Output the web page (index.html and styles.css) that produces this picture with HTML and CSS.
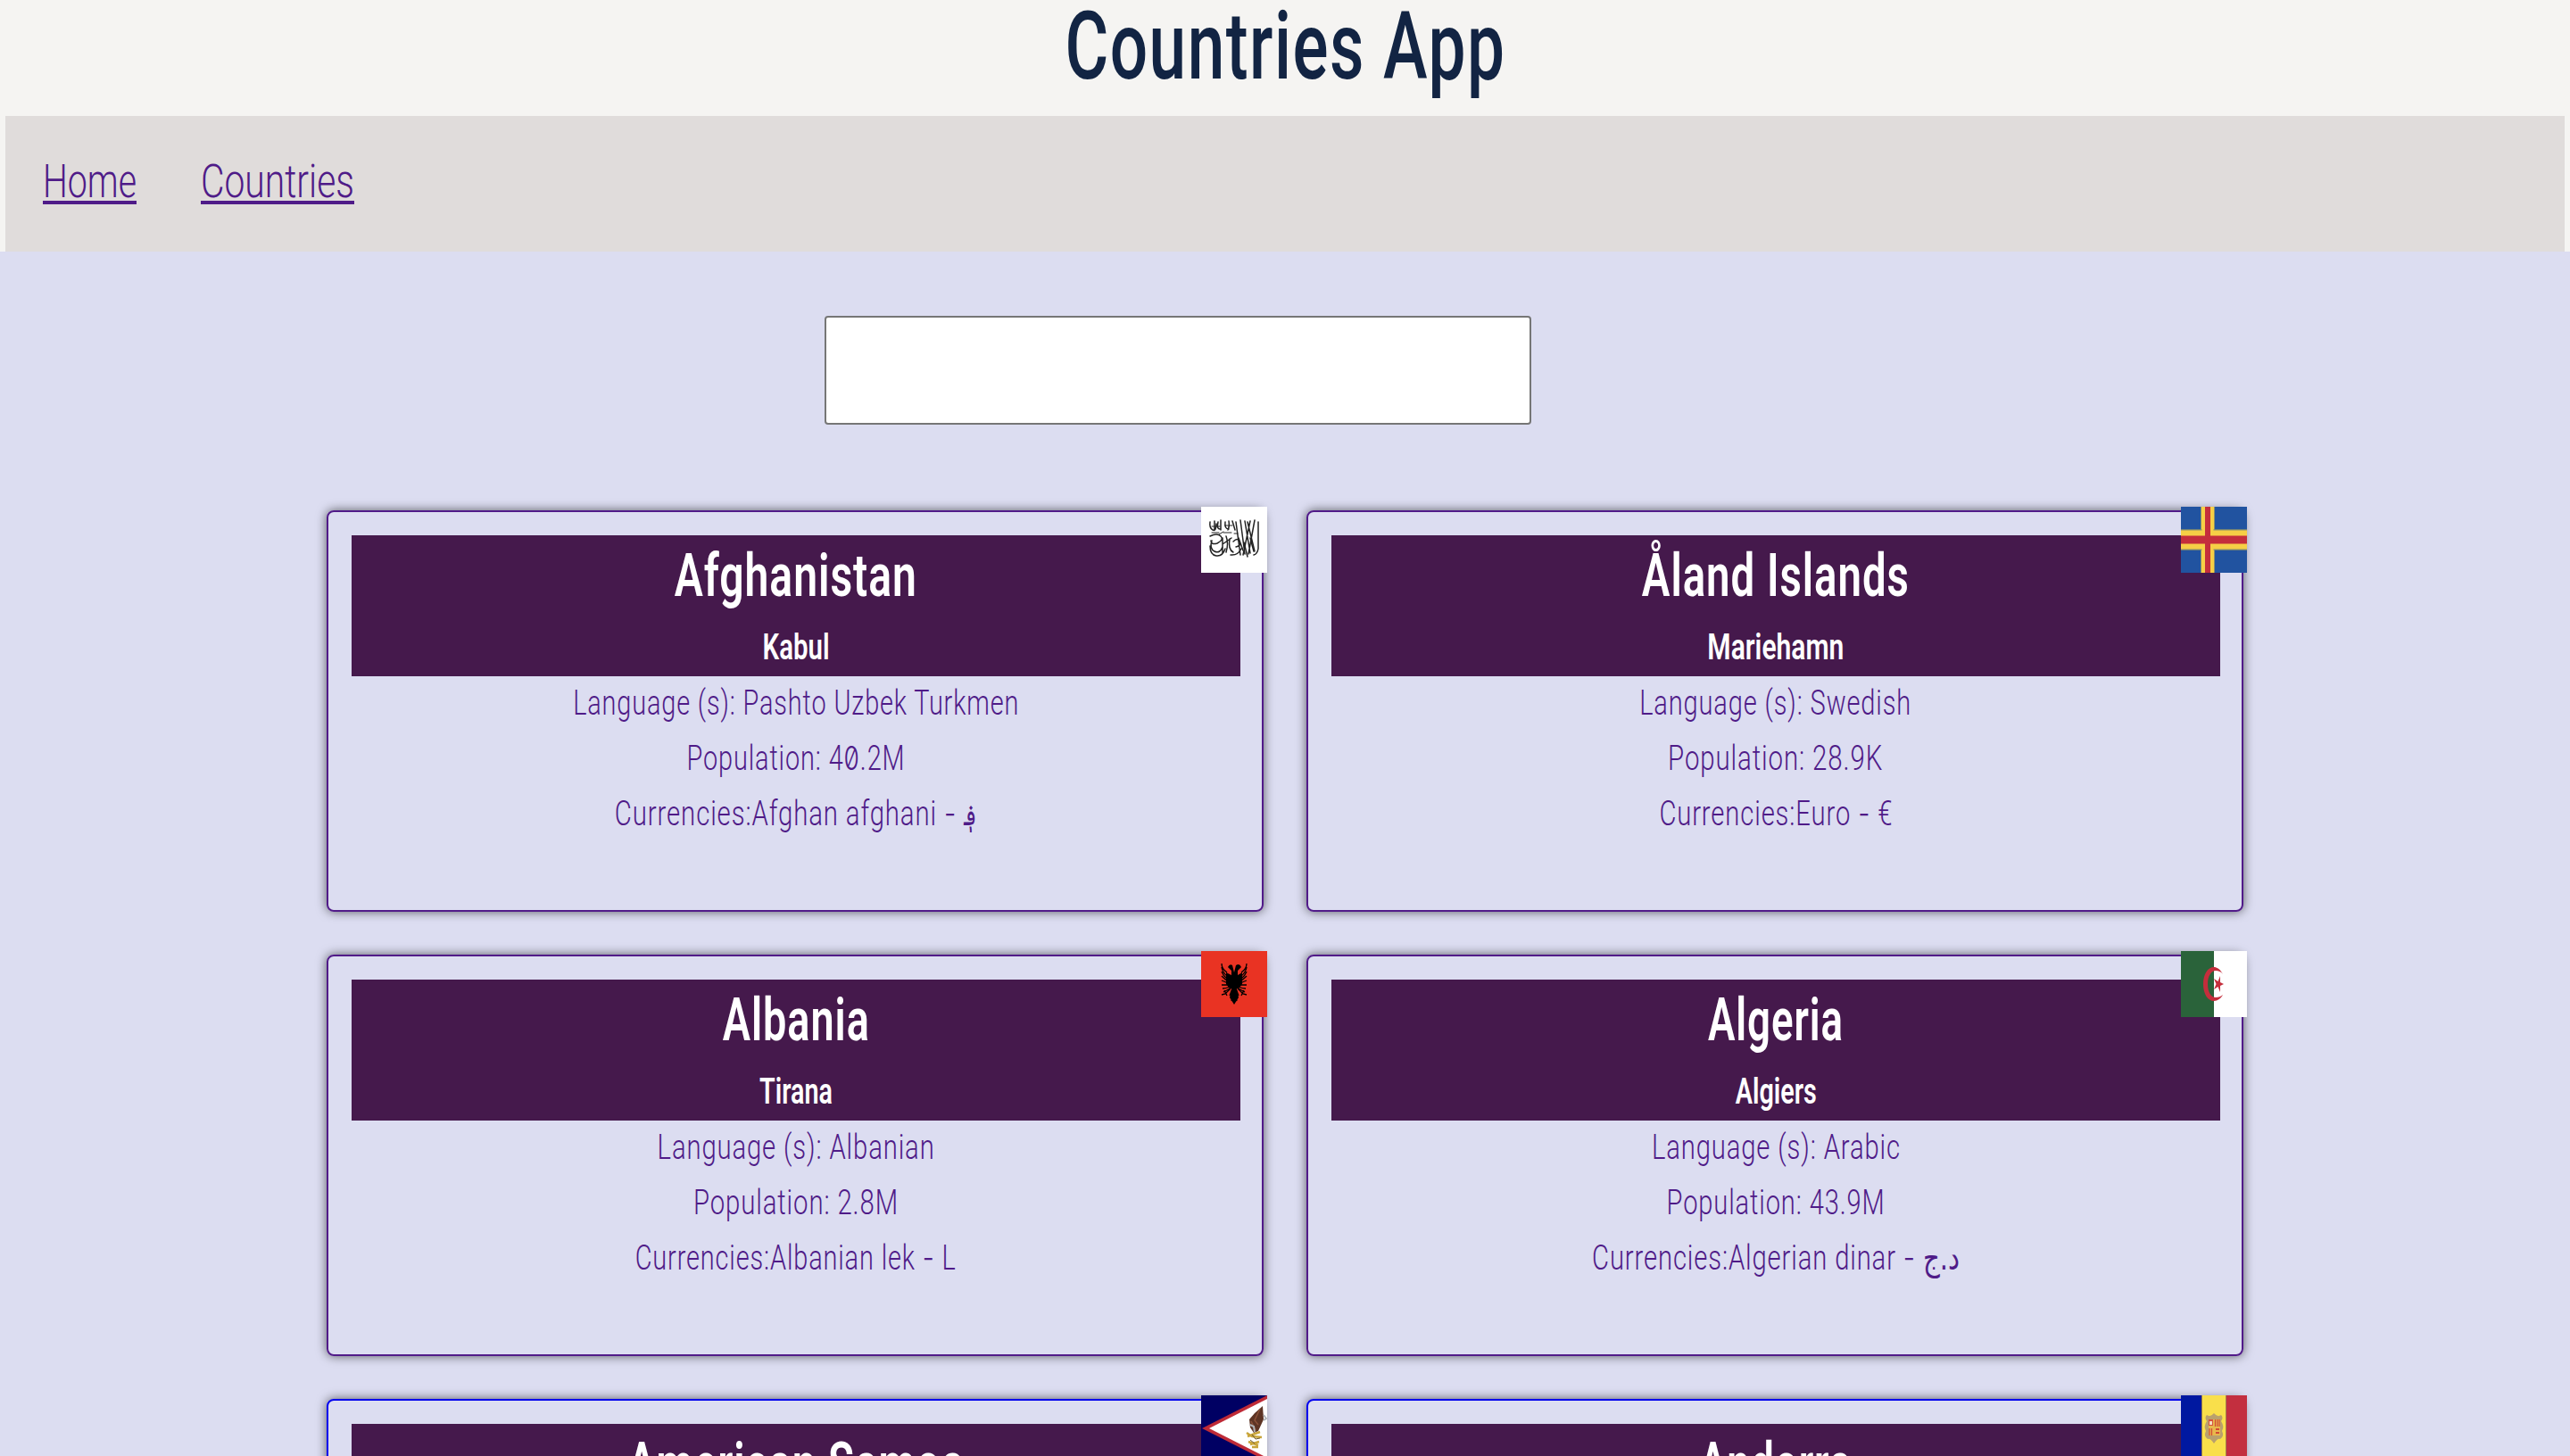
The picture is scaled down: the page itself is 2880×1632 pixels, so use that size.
FILE: index.html
```html
<!DOCTYPE html>
<html lang="en">
<head>
<meta charset="utf-8">
<title>Countries App</title>
<link rel="stylesheet" href="styles.css">
</head>
<body>
<header class="header">
  <h1 class="app-title"><span data-width="494">Countries App</span></h1>
  <nav class="nav">
    <a class="nav-link" href="#"><span data-width="105">Home</span></a>
    <a class="nav-link" href="#"><span data-width="172">Countries</span></a>
  </nav>
</header>
<main class="main">
  <input class="search" type="text" aria-label="Search countries">
  <div class="grid">

    <article class="card">
      <svg class="flag" viewBox="0 0 74 74">
        <rect width="74" height="74" fill="#fff"/>
        <g fill="none" stroke="#222" stroke-width="1.5" stroke-linecap="round">
          <path d="M10 17q-1 7 3 9t4-7M15 16v10M19 17q-2 9 3 8M22 15v11M27 17q-1 8 4 8M31 16q1 6-1 10M35 16l3 10M39 17l5 37M44 15l5 38M49 16l6 36M55 16l-8 38M52 17l8 33M60 15l-7 38M64 17v30q-1 6-5 7"/>
          <path d="M10 33q8-4 12 0t-4 8q-7 2-7-3M10 44q0 10 7 11t10-8M12 38q-3 9 3 12t9-5M24 35v17M28 33q3 8 0 18M24 42l10-7M32 36q-2 12 4 15M36 39q5-5 7 0t-4 6M33 54q8 1 12-7M42 35l5 14M48 40l4 16M55 35l4 15"/>
          <path d="M12 29h8M25 29h9M37 30h4M20 31l5-3M12 22h9M27 21h8" stroke-width="1"/>
        </g>
      </svg>
      <div class="banner">
        <h2 class="name"><span data-width="272">Afghanistan</span></h2>
        <h3 class="capital"><span data-width="75">Kabul</span></h3>
      </div>
      <p class="fact"><span data-width="500">Language (s): Pashto Uzbek Turkmen</span></p>
      <p class="fact"><span data-width="245">Population: 4<b class="zero">0</b>.2M</span></p>
      <p class="fact"><span data-width="406">Currencies:Afghan afghani <span class="dash">-</span> <bdi class="symbol symbol-afn">؋</bdi></span></p>
    </article>

    <article class="card">
      <svg class="flag" viewBox="0 0 74 74">
        <rect width="74" height="74" fill="#2153a0"/>
        <path d="M30 0V74M0 37H74" stroke="#8a8f6a" stroke-width="16"/>
        <path d="M30 0V74" stroke="#f6cf46" stroke-width="14"/>
        <path d="M0 37H74" stroke="#8a8f6a" stroke-width="23.500"/>
        <path d="M0 37H74" stroke="#f6cf46" stroke-width="21"/>
        <path d="M30 0V74" stroke="#f6cf46" stroke-width="13"/>
        <path d="M30 0V74" stroke="#c42e3c" stroke-width="6"/>
        <path d="M0 37H74" stroke="#c42e3c" stroke-width="9"/>
      </svg>
      <div class="banner">
        <h2 class="name"><span data-width="300">Åland Islands</span></h2>
        <h3 class="capital"><span data-width="153">Mariehamn</span></h3>
      </div>
      <p class="fact"><span data-width="305">Language (s): Swedish</span></p>
      <p class="fact"><span data-width="241">Population: 28.9K</span></p>
      <p class="fact"><span data-width="262">Currencies:Euro <span class="dash">-</span> €</span></p>
    </article>

    <article class="card">
      <svg class="flag" viewBox="0 0 74 74">
        <rect width="74" height="74" fill="#e93323"/>
        <path d="M28 24L34 27V22L30 18Q32 14 35 16L37 24L39 16Q43 13 45 18L41 22V27L46 24V37L42 42H32L28 37Z"/>
        <path d="M35 40H39L42 52L37 60L32 52Z"/>
        <g fill="none" stroke="#000" stroke-width="1.300">
          <path d="M23 14Q23 20 29 24M23 18Q24 24 29 28M23 23Q25 28 29 31M23 28Q26 31 30 34M23 33Q26 34 30 36M23 38Q27 38 31 38M24 42Q28 42 32 40M25 46L34 41M23 49L27 48L33 42M26 44L29 50M32 50L35 42M34 56L37 46"/>
          <path d="M51 14Q51 20 45 24M51 18Q50 24 45 28M51 23Q49 28 45 31M51 28Q48 31 44 34M51 33Q48 34 44 36M51 38Q47 38 43 38M50 42Q46 42 42 40M49 46L40 41M51 49L47 48L41 42M48 44L45 50M42 50L39 42M40 56L37 46"/>
        </g>
      </svg>
      <div class="banner">
        <h2 class="name"><span data-width="165">Albania</span></h2>
        <h3 class="capital"><span data-width="82">Tirana</span></h3>
      </div>
      <p class="fact"><span data-width="311">Language (s): Albanian</span></p>
      <p class="fact"><span data-width="230">Population: 2.8M</span></p>
      <p class="fact"><span data-width="360">Currencies:Albanian lek <span class="dash">-</span> L</span></p>
    </article>

    <article class="card">
      <svg class="flag" viewBox="0 0 74 74">
        <rect width="74" height="74" fill="#fff"/>
        <rect width="37" height="74" fill="#2a633a"/>
        <path d="M47 26C44 20 40 18 37 18C30 18 25 26 25 37S30 56 37 56C41 56 45 53 47 49C45 51 42 52 39 52C34 52 30 46 30 37S34 22 39 22C42 22 45 23 47 26Z" fill="#c42e3c"/>
        <path d="M44 28L44 35L48 37L44 39L44 46L41.500 40L37 43L39.500 37L37 31L41.500 34Z" fill="#c42e3c"/>
      </svg>
      <div class="banner">
        <h2 class="name"><span data-width="152">Algeria</span></h2>
        <h3 class="capital"><span data-width="91">Algiers</span></h3>
      </div>
      <p class="fact"><span data-width="279">Language (s): Arabic</span></p>
      <p class="fact"><span data-width="245">Population: 43.9M</span></p>
      <p class="fact"><span data-width="412">Currencies:Algerian dinar <span class="dash">-</span> <bdi class="symbol">د.ج</bdi></span></p>
    </article>

    <article class="card card-unvisited">
      <svg class="flag" viewBox="0 0 74 74">
        <rect width="74" height="74" fill="#000063"/>
        <path d="M74 0V74L1 37Z" fill="#be2a37"/>
        <path d="M74 4V70L9 37Z" fill="#fff"/>
        <path d="M69 12L70 27L64 40L59 42L55 36L54 27L60 20Z" fill="#5d3424"/>
        <path d="M66 15L60 28L64 33M56 29L61 39" stroke="#8a5138" stroke-width="1.500" fill="none"/>
        <path d="M70 22L73 26L70 28M55 33L59 35L60 41" stroke="#aeb2b6" stroke-width="2" fill="none"/>
        <path d="M51 42L57 46L68 47M52 46L66 41M53 52L64 56M55 55L65 52M57 58L64 58" stroke="#c9a53a" stroke-width="2.500" fill="none"/>
        <path d="M57 44L61 49L66 48M55 50L60 54" stroke="#6d5830" stroke-width="1" fill="none"/>
      </svg>
      <div class="banner">
        <h2 class="name"><span data-width="378">American Samoa</span></h2>
      </div>
    </article>

    <article class="card card-unvisited">
      <svg class="flag" viewBox="0 0 74 74">
        <rect width="74" height="74" fill="#f9df4b"/>
        <rect width="23.500" height="74" fill="#0018a0"/>
        <rect x="50.500" width="23.500" height="74" fill="#c32f3f"/>
        <path d="M23.500 0V74M50.500 0V74" stroke="#a1824a" stroke-width="1"/>
        <path d="M29 22Q33 25 37 20Q41 25 45 22Q48 25 45 29Q49 35 46 40Q49 46 44 49Q41 48 37 54Q33 48 30 49Q25 46 28 40Q25 35 29 29Q26 25 29 22Z" fill="#b9a06d"/>
        <rect x="31" y="27" width="13" height="18" fill="#e8b74c"/>
        <path d="M31 27H36V34H31Z" fill="#d5523d"/>
        <path d="M32 29H35V33H32Z" fill="#f4dcc0"/>
        <path d="M38.500 27V35M40.800 27V35M43 27V35M32 37V45M34.500 37V45" stroke="#d04a35" stroke-width="1.200"/>
        <path d="M39 38H43M39 42H43" stroke="#d04a35" stroke-width="1.800"/>
      </svg>
      <div class="banner">
        <h2 class="name"><span data-width="171">Andorra</span></h2>
      </div>
    </article>

  </div>
</main>
<script src="fit.js"></script>
</body>
</html>
```

FILE: styles.css
```css
* { box-sizing: border-box; margin: 0; padding: 0; }

html, body { height: 100%; overflow: hidden; }

body {
  background: #dcddf1;
  font-family: Roboto, "Liberation Sans", sans-serif;
  font-weight: 300;
  color: #4f1b88;
}

/* Labels are condensed horizontally around their centre */
[data-width] {
  display: inline-block;
  white-space: nowrap;
}

.header {
  background: #f5f4f2;
  height: 282px;
  padding: 0 6px;
}

.app-title {
  height: 130px;
  text-align: center;
  font-size: 106px;
  line-height: 104px;
  font-weight: 500;
  letter-spacing: 0.02em;
  color: #122443;
}

.nav {
  height: 152px;
  background: #e0dcdb;
  display: flex;
  gap: 72px;
  padding: 44px 42px 0;
  font-size: 51px;
  line-height: 60px;
}

.nav-link {
  color: #4f1b88;
  text-decoration: none;
}

.nav-link [data-width] {
  transform-origin: left center;
  text-decoration: underline;
  text-decoration-thickness: 4px;
  text-underline-offset: 4px;
  text-decoration-skip-ink: none;
}

.main {
  padding-top: 72px;
}

.search {
  display: block;
  width: 792px;
  height: 122px;
  margin-left: 924px;
  border: 2px solid #767676;
  border-radius: 4px;
  background: #fff;
}

.grid {
  display: grid;
  grid-template-columns: 1050px 1050px;
  grid-auto-rows: 450px;
  gap: 48px;
  margin: 96px 0 0 366px;
}

.card {
  position: relative;
  border: 2px solid #511b89;
  border-radius: 8px;
  padding: 26px 24px 0 26px;
  box-shadow: 0 0 12px rgba(0, 0, 0, 0.6);
  text-align: center;
}

.card-unvisited { border-color: #0000ee; }

.flag {
  position: absolute;
  top: -6px;
  right: -6px;
  width: 74px;
  height: 74px;
}

.banner {
  height: 158px;
  padding-top: 1px;
  background: #45194c;
  color: #fff;
}

.name {
  font-size: 66px;
  line-height: 89px;
  height: 89px;
  font-weight: 600;
  letter-spacing: 0.02em;
}

.capital {
  margin-top: 3px;
  font-size: 40px;
  line-height: 65px;
  height: 65px;
  font-weight: 600;
}

.fact {
  height: 58px;
  margin-bottom: 4px;
  font-size: 38px;
  line-height: 60px;
  letter-spacing: 0.03em;
}

.zero {
  font-family: Inter, sans-serif;
  font-feature-settings: "zero";
  font-size: 37px;
  font-weight: 300;
  line-height: 0;
}

.dash {
  font-family: Inter, sans-serif;
  line-height: 0;
}

.symbol {
  font-family: "DejaVu Sans", sans-serif;
  font-size: 38px;
  font-weight: 400;
  letter-spacing: 0;
  line-height: 0;
}

.symbol-afn { font-size: 32px; }
```

FILE: fit.js
```js
// Condense every label to its set width; negative margins keep the flow width equal to the drawn width.
document.querySelectorAll('[data-width]').forEach(function (label) {
  var target = Number(label.dataset.width);
  var natural = label.getBoundingClientRect().width;
  label.style.transform = 'scaleX(' + target / natural + ')';
  if (label.closest('.nav-link')) {
    label.style.marginRight = (target - natural) + 'px';
  } else {
    label.style.margin = '0 ' + (target - natural) / 2 + 'px';
  }
});
```
